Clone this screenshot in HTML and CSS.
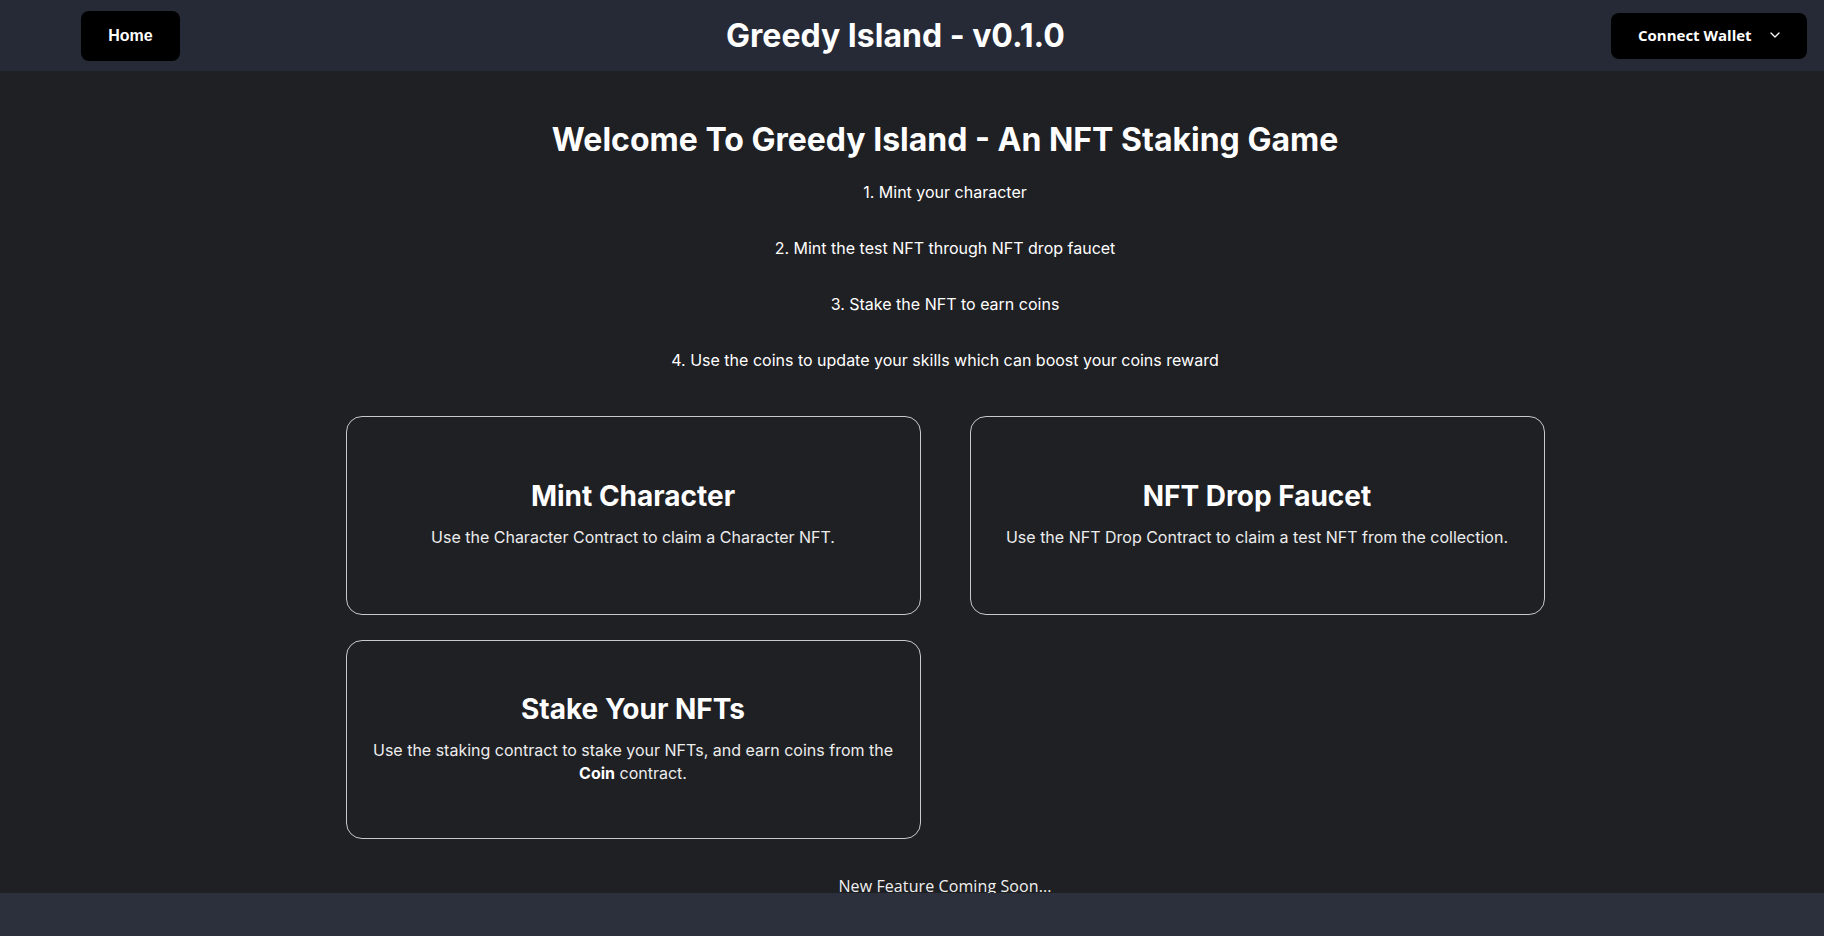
FILE: index.html
```html
<!DOCTYPE html>
<html lang="en">
<head>
<meta charset="utf-8">
<title>Greedy Island</title>
<link rel="stylesheet" href="styles.css">
</head>
<body>
<header class="topbar">
  <button class="home-btn">Home</button>
  <h1 class="brand">Greedy Island - v0.1.0</h1>
  <button class="wallet-btn">
    <span>Connect Wallet</span>
    <svg class="chev" width="10" height="6" viewBox="0 0 10 6"><path d="M1 1 L5 5 L9 1" fill="none" stroke="#fff" stroke-width="1.3" stroke-linecap="round" stroke-linejoin="round"/></svg>
  </button>
</header>
<main class="main">
  <h2 class="welcome">Welcome To Greedy Island - An NFT Staking Game</h2>
  <div class="steps">
    <p>1. Mint your character</p>
    <p>2. Mint the test NFT through NFT drop faucet</p>
    <p>3. Stake the NFT to earn coins</p>
    <p>4. Use the coins to update your skills which can boost your coins reward</p>
  </div>
  <div class="cards">
    <div class="card">
      <h3>Mint Character</h3>
      <p>Use the Character Contract to claim a Character NFT.</p>
    </div>
    <div class="card">
      <h3>NFT Drop Faucet</h3>
      <p>Use the NFT Drop Contract to claim a test NFT from the collection.</p>
    </div>
    <div class="card">
      <h3>Stake Your NFTs</h3>
      <p>Use the staking contract to stake your NFTs, and earn coins from the <b>Coin</b> contract.</p>
    </div>
  </div>
  <p class="soon">New Feature Coming Soon...</p>
</main>
<footer class="footer"></footer>
</body>
</html>
```
FILE: styles.css
```css
* { box-sizing: border-box; }
html, body { margin: 0; padding: 0; }
body {
  background: #1f2024;
  color: #fff;
  font-family: "Inter", "Noto Sans", sans-serif;
  min-height: 936px;
}
.topbar {
  height: 71px;
  background: #262a37;
  display: flex;
  align-items: center;
  justify-content: space-between;
  padding: 0 17px 0 81px;
}
.home-btn {
  width: 99px;
  height: 50px;
  background: #000;
  color: #fff;
  border: none;
  border-radius: 8px;
  font-family: "Liberation Sans", Arial, sans-serif;
  font-weight: 700;
  font-size: 16px;
}
.brand {
  margin: 0;
  font-size: 32px;
  font-weight: 700;
  line-height: normal;
}
.wallet-btn {
  width: 196px;
  height: 46px;
  background: #000;
  color: #fff;
  border: none;
  border-radius: 8px;
  display: flex;
  align-items: center;
  padding: 0 0 1px 27px;
  gap: 18px;
  font-family: "Open Sans", sans-serif;
  font-weight: 700;
  font-size: 15px;
}
.chev { display: block; }
.main {
  padding: 49px 0 0 66px;
  display: flex;
  flex-direction: column;
  align-items: center;
}
.welcome {
  margin: 0;
  font-size: 32px;
  font-weight: 700;
  line-height: normal;
}
.steps {
  margin-top: 21px;
  display: flex;
  flex-direction: column;
  align-items: center;
  gap: 32px;
}
.steps p {
  margin: 0;
  font-size: 16px;
  line-height: 24px;
}
.cards {
  margin-top: 44px;
  display: grid;
  grid-template-columns: 575px 575px;
  column-gap: 49px;
  row-gap: 25px;
}
.card {
  height: 199px;
  border: 1px solid #c9c9cc;
  border-radius: 16px;
  display: flex;
  flex-direction: column;
  justify-content: center;
  align-items: center;
  text-align: center;
  padding: 0 22px 2px;
}
.card h3 {
  margin: 0 0 13px 0;
  font-size: 28px;
  font-weight: 700;
  line-height: normal;
}
.card p {
  margin: 0;
  font-size: 16px;
  line-height: 23.5px;
  color: #ededed;
}
.card b { font-weight: 700; color: #fff; }
.soon {
  margin: 36px 0 0 0;
  font-family: "Open Sans", sans-serif;
  font-size: 16px;
  letter-spacing: 0.1px;
  color: #f0f0f0;
}
.footer {
  position: fixed;
  left: 0;
  right: 0;
  bottom: 0;
  height: 43px;
  background: #2b303c;
}
```
